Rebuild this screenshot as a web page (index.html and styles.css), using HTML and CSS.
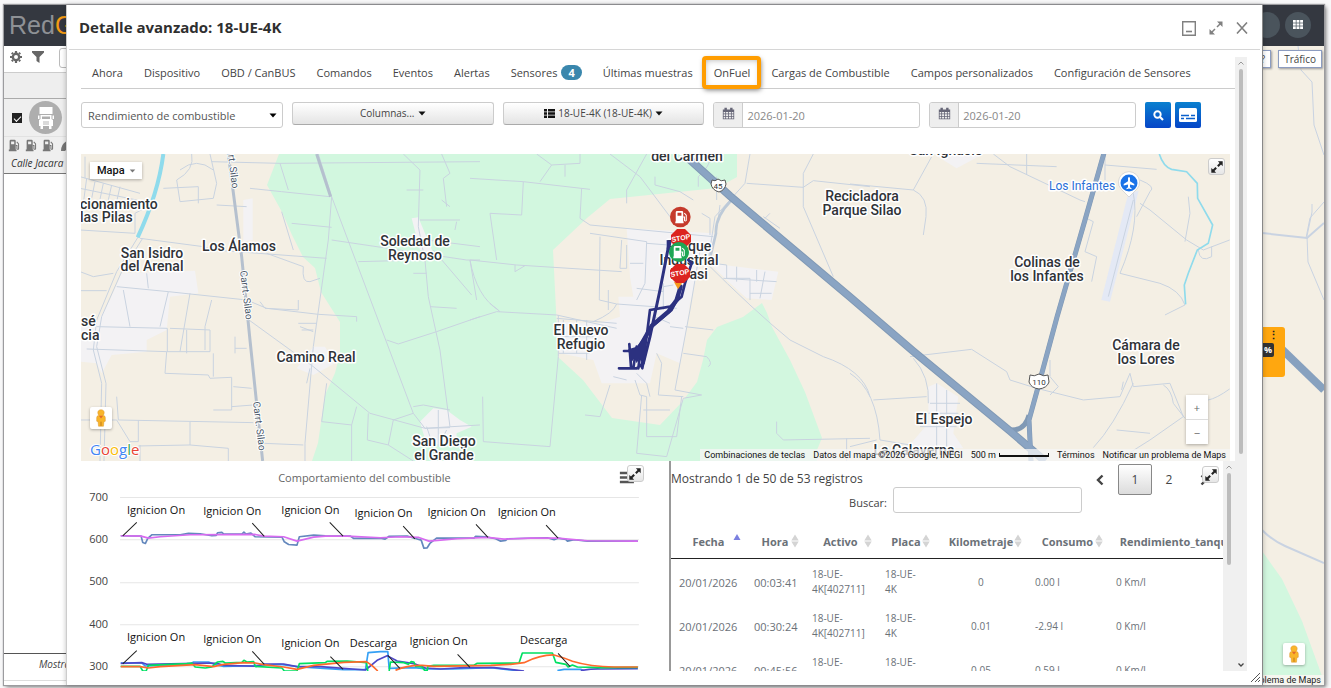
FILE: index.html
```html
<!DOCTYPE html>
<html lang="es">
<head>
<meta charset="utf-8">
<title>Detalle avanzado: 18-UE-4K</title>
<link rel="stylesheet" href="styles.css">
</head>
<body>
<svg class="defs" width="0" height="0" aria-hidden="true">
  <symbol id="expand" viewBox="0 0 16 16"><path d="M9 1.500H14.500V7L12.600 5.100 9.800 7.900 8.100 6.200 10.900 3.400ZM7 14.500H1.500V9L3.400 10.900 6.200 8.100 7.900 9.800 5.100 12.600Z"/></symbol>
  <symbol id="sort" viewBox="0 0 8 14"><path d="M4 .5L7.700 6.500H.3ZM4 13.500L.3 7.500H7.700Z"/></symbol>
  <symbol id="caret" viewBox="0 0 8 5"><path d="M.5.500H7.500L4 4.500Z"/></symbol>
  <symbol id="pump" viewBox="0 0 16 16"><path d="M2 2.500Q2 1 3.500 1H8Q9.500 1 9.500 2.500V13H10.500V15H1V13H2ZM3.800 3V6.500H7.700V3Z" fill-rule="evenodd"/><path d="M9.500 8H11V12Q12.200 13.500 13 12V6L10.800 3.600" fill="none" stroke="currentColor" stroke-width="1.300"/></symbol>
  <symbol id="pump-solid" viewBox="0 0 16 16"><path d="M2 2.500Q2 1 3.500 1H9Q10.500 1 10.500 2.500V13H11V15H1.500V13H2ZM4 3V6.500H8.500V3Z" fill-rule="evenodd"/><path d="M10.500 8H12V12Q13 13.300 14 12V6L11.800 3.600" fill="none" stroke="currentColor" stroke-width="1.200"/></symbol>
  <symbol id="calendar" viewBox="0 0 16 16"><path d="M1 3H3V1H6V3H10V1H13V3H15V15H1ZM2 6V8H4V6ZM5 6V8H7.500V6ZM8.500 6V8H11V6ZM12 6V8H14V6ZM2 9V11H4V9ZM5 9V11H7.500V9ZM8.500 9V11H11V9ZM12 9V11H14V9ZM2 12V14H4V12ZM5 12V14H7.500V12ZM8.500 12V14H11V12ZM12 12V14H14V12Z" fill-rule="evenodd"/></symbol>
  <symbol id="pegman" viewBox="0 0 22 24"><path d="M11 3C8.500 3 7.500 4.500 7.500 6.200Q7.500 7.800 8.500 8.900Q6.500 9.500 6.300 11.500V15.500L7.800 16 8.300 21H13.700L14.200 16 15.700 15.500V11.500Q15.500 9.500 13.500 8.900Q14.500 7.800 14.500 6.200C14.500 4.500 13.500 3 11 3Z" fill="#f9b52b" stroke="#d8902a" stroke-width=".5"/><path d="M8.700 9.500L11 12.500 13.300 9.500Z" fill="#e0692e"/><path d="M11 16V20.500" stroke="#b97418"/></symbol>
</svg>

<div class="app">
  <header class="topbar">
    <div class="logo">Red<span>G</span></div>
    <div class="top-actions">
      <button class="round" aria-label="Cuenta"></button>
      <button class="round" aria-label="Aplicaciones"><svg width="10" height="9" viewBox="0 0 10 9"><path d="M0 0H10V9H0Z" fill="#fff"/><path d="M3.200 0V9M6.700 0V9M0 3H10M0 6H10" stroke="#59646d" stroke-width=".8"/></svg></button>
    </div>
  </header>
  <div class="workspace">
    <aside class="sidebar">
      <div class="side-tools">
        <svg width="12" height="12" viewBox="0 0 12 12"><circle cx="6" cy="6" r="3.200" fill="none" stroke="#666" stroke-width="2.400"/><path d="M6 0V2M6 10V12M0 6H2M10 6H12M1.800 1.800L3 3M9 9L10.200 10.200M10.200 1.800L9 3M3 9L1.800 10.200" stroke="#666" stroke-width="2.200"/></svg>
        <svg width="12" height="12" viewBox="0 0 12 12"><path d="M0 0H12V1.500L7.500 6V12L4.500 10V6L0 1.500Z" fill="#666"/></svg>
        <input class="side-search" type="text" aria-label="Filtrar">
      </div>
      <div class="side-group"></div>
      <div class="unit">
        <div class="unit-main">
          <input type="checkbox" class="tick" checked aria-label="Seleccionar unidad">
          <span class="avatar"><svg width="16" height="22" viewBox="0 0 16 22"><path d="M1.500 0H14.500V7H1.500ZM2.500 8H13.500V12L15 13V19H13.500V22H11V19H5V22H2.500V19H1V13L2.500 12ZM0 8.500H1.500V12H0ZM14.500 8.500H16V12H14.500Z" fill="#fff"/><path d="M4 9.500H12V12H4Z" fill="#aeaeae"/><path d="M5 15H11M5 17H11" stroke="#aeaeae" stroke-width=".9"/></svg></span>
        </div>
        <div class="unit-icons">
          <svg width="13" height="13"><use href="#pump"/></svg>
          <svg width="13" height="13"><use href="#pump"/></svg>
          <svg width="13" height="13"><use href="#pump"/></svg>
          <svg width="13" height="13" viewBox="0 0 13 13"><path d="M2 12Q2 3 11 1V10Q7 10 6 12Z"/></svg>
        </div>
        <div class="unit-place">Calle Jacara</div>
      </div>
      <div class="side-foot"><span>Mostra</span></div>
    </aside>
    <div class="bg-map">
      <svg class="bg-art" viewBox="66 46 1258 639" preserveAspectRatio="xMaxYMid slice">
        <path d="M1262 551L1282 579 1302 621 1322 676V685H1262Z" fill="#d2f7df"/>
        <g fill="none" stroke="#c9d3e2">
          <path d="M1298 46L1301 70 1312 82 1314 125 1324 155"/>
          <path d="M1324 202L1310 218 1306 238M1324 300L1308 262 1307 236 1312 212 1312 204"/>
          <path d="M1262 233L1307 238 1324 223M1262 530Q1273 541 1285 546L1324 563" stroke-width="2"/>
        </g>
        <path d="M1262 330L1324 390" stroke="#87a1bf" stroke-width="8"/>
      </svg>
      <div class="bg-buttons"><button class="pill" aria-label="Ayuda">?</button><button class="pill">Tráfico</button></div>
      <div class="unit-card"><span class="dots">⋮</span><b>%</b></div>
      <button class="peg bg-peg" aria-label="Street View"><svg width="22" height="22"><use href="#pegman"/></svg></button>
      <div class="bg-credit">blema de Maps</div>
    </div>
  </div>

  <section class="modal" role="dialog" aria-labelledby="modal-title">
    <header class="modal-head">
      <h1 id="modal-title">Detalle avanzado: 18-UE-4K</h1>
      <div class="win-buttons">
        <button aria-label="Minimizar"><svg width="14" height="15" viewBox="0 0 14 15"><path d="M.7.700H13.300V14.300H.7Z" fill="none" stroke="#808080" stroke-width="1.400"/><path d="M4 10.500H10" stroke="#808080" stroke-width="1.600"/></svg></button>
        <button aria-label="Maximizar"><svg width="14" height="14" viewBox="0 0 14 14"><path d="M8 .5H13.500V6ZM6 13.500H.5V8Z" fill="#808080"/><path d="M12 2L8 6M2 12L6 8" stroke="#808080" stroke-width="1.500"/></svg></button>
        <button aria-label="Cerrar"><svg width="12" height="12" viewBox="0 0 12 12"><path d="M1 .5L11 11.500M11 .5L1 11.500" stroke="#808080" stroke-width="1.600"/></svg></button>
      </div>
    </header>
    <div class="modal-body">
      <div class="content">
        <nav class="tabs">
          <a href="#ahora">Ahora</a><a href="#dispositivo">Dispositivo</a><a href="#obd">OBD / CanBUS</a><a href="#comandos">Comandos</a><a href="#eventos">Eventos</a><a href="#alertas">Alertas</a><a href="#sensores">Sensores <span class="badge">4</span></a><a href="#muestras">Últimas muestras</a><a href="#onfuel" class="marked">OnFuel</a><a href="#cargas">Cargas de Combustible</a><a href="#campos">Campos personalizados</a><a href="#config">Configuración de Sensores</a>
        </nav>
        <div class="controls">
          <div class="select"><select aria-label="Reporte"><option>Rendimiento de combustible</option></select><svg width="8" height="5"><use href="#caret"/></svg></div>
          <button class="drop">Columnas...<svg width="8" height="5"><use href="#caret"/></svg></button>
          <button class="drop"><svg width="11" height="9" viewBox="0 0 11 9"><path d="M0 0H3V2.400H0ZM4 0H11V2.400H4ZM0 3.300H3V5.700H0ZM4 3.300H11V5.700H4ZM0 6.600H3V9H0ZM4 6.600H11V9H4Z"/></svg>18-UE-4K (18-UE-4K)<svg width="8" height="5"><use href="#caret"/></svg></button>
          <label class="date"><span><svg width="13" height="13"><use href="#calendar"/></svg></span><input type="text" value="2026-01-20" aria-label="Desde"></label>
          <label class="date"><span><svg width="13" height="13"><use href="#calendar"/></svg></span><input type="text" value="2026-01-20" aria-label="Hasta"></label>
          <div class="go">
            <button aria-label="Buscar"><svg width="11" height="11" viewBox="0 0 11 11"><circle cx="4.500" cy="4.500" r="3.200" fill="none" stroke="#fff" stroke-width="1.900"/><path d="M6.800 6.800L10 10" stroke="#fff" stroke-width="2.200"/></svg></button>
            <button aria-label="Leyenda"><svg width="18" height="14" viewBox="0 0 18 14"><rect width="18" height="14" rx="1.500" fill="#fff"/><path d="M2 7.500H10M12 7.500H16M2 10.500H5M7 10.500H16" stroke="#0a60cc" stroke-width="1.600"/></svg></button>
          </div>
        </div>

        <div class="map">
          <svg class="map-art" viewBox="81 154 1149 307" preserveAspectRatio="xMidYMid slice" role="img" aria-label="Mapa de recorrido">
            <rect x="-500" y="100" width="2400" height="420" fill="#f4efe4"/>
            <path fill="#d2f7df" d="M279 154L267 185 282 212 292 235 303 257 315 268 321 292 340 322V353L335 373 325 395 318 443 312 461H817V450L822 438 805 392 790 360 772 327 767 313 762 303 743 317 717 327 707 340 703 360 697 382 682 402 660 425 612 418 583 380 558 357 556 310 553 250 587 218 610 199 717 188 737 177V154Z"/>
            <g transform="translate(80 150) scale(.3333)">
              <path fill="#f3f2f4" d="M125 370L345 362 355 430 270 440 260 540 200 570V605L95 615 65 670 50 640 0 635V530L50 520 90 450ZM490 150L518 145 518 270 490 275ZM1020 815L1060 775 1100 780 1140 810 1175 830 1130 850V880L1040 885ZM995 205L1015 202 1060 310 1020 300ZM650 655L700 590 735 590 765 640 700 675Z"/>
              <g fill="none" stroke="#c9d3e0" stroke-width="3">
                <path d="M0 80L180 130M0 115L170 150M20 85L10 160M45 95L35 145M70 100L60 148M95 105L85 150M120 110L110 155M0 240L165 250V190L230 155M15 85V20M335 12Q345 60 290 90L300 155 400 145 410 100 390 12M300 60Q350 20 400 60M250 115L355 110V160M180 265L370 290 400 300 740 325M175 260L110 365 50 510 40 600 65 700 60 933M188 265L125 365 65 500 50 590 78 700 72 933" />
                <path d="M395 35L600 40 1200 35M410 165L500 170M510 115L605 125 750 140M600 40L625 120M0 365L40 380 100 370M0 422H80M110 410L265 425 500 450 560 475 715 493 830 500V515M265 425L240 530M130 420L150 530M200 370L205 415M330 430L300 605M395 450L375 530V600M50 530L262 535V605M20 597L260 605H390V540L270 535M320 610V540M260 605L255 670 385 675 390 685 455 682V780H400M460 710L515 715M455 770L520 765M110 740L115 810 520 818M0 810L110 810 150 875H175V812M330 815V885L175 888M180 885V933M330 885L445 895V933M550 880L670 885" />
                <path d="M715 12L755 140 745 270 700 590 675 880V933M500 505L700 650 870 790 1035 835 1200 825M690 655L680 700M740 700L725 815 815 825 815 933M830 770L815 825M865 790L862 870 925 885 1000 933M925 885L940 810 1000 790M1035 835L1110 833M970 12L1020 60 1015 230 1035 330 1045 440 1080 600 1110 830M1200 500L1070 545 955 582 920 570M755 140L1000 790 1035 835M755 270L1160 330H1200M835 335L1030 330M1040 270L1200 290M1020 210H1140M1130 215L1125 240M1060 300L1175 435M1085 150L1110 170M1085 12L1110 70 1090 85 1100 170M1030 120H980M1050 470L1130 475M1000 370H1040M1170 330L1190 450M635 220L755 232M605 185L640 300M560 310L670 350Q665 400 690 395L720 385M540 455L555 475 655 480V450M465 560V610M465 595H500M400 680V610M1000 770L1030 765 1110 780M1040 830L1060 890M1075 780V890M1100 840L1080 880M655 520H710M660 530L700 545M665 540H700" />
              </g>
              <path fill="none" stroke="#b5c0ce" stroke-width="9" d="M445 12L485 320 510 570 548 933M710 12L752 140"/>
              <path fill="none" stroke="#8fdbec" stroke-width="12" d="M250 12Q235 130 173 262"/>
            </g>
            <g transform="translate(470 150) scale(.3333)">
              <path fill="#f3f2f4" d="M470 235L730 250 735 285 690 340 660 460 650 530 630 640 560 610 540 700H395L370 630 270 610V515L390 520 450 500 445 440H490L480 380ZM720 340L925 365 905 450 830 445 770 390Z"/>
              <g fill="none" stroke="#c9d3e0" stroke-width="3">
                <path d="M0 85L160 95 360 118M160 95L155 195 60 190 80 330M200 12L245 45 210 95M245 45L330 40V12M285 45V80M420 12L510 80 600 200M530 12L470 120V160M335 115L330 205 360 225 730 260M360 250L530 275 525 400 500 450M390 260L388 450 440 462 620 475M455 270L450 355H470V285M530 280L595 285M480 340H520M500 415L580 425V400M0 330L140 345 455 365M135 345V365L165 347M0 510L80 485 260 495 440 535M0 330Q20 440 85 480M60 460L90 485M260 505L440 520M265 495V620L240 890 40 875 38 740M280 510V610M320 510V610M350 510V630M270 560H370M265 610H360M370 515Q430 490 440 462M415 420V480" />
                <path d="M690 300L660 480 615 720 695 735 640 745 590 920 500 910 515 735M685 110V80Q720 50 725 12M740 80V150M695 190L720 205V255M750 165L745 205M840 12L825 100 780 150 735 200 715 330M830 100L1000 112 1030 92 1200 110M1030 12L1000 70V170L1090 380M700 330Q850 480 960 570L1060 620Q1180 660 1200 740M730 340L770 345V385H840V450M800 350V395M860 360V395M885 365L870 445M760 385L920 395M840 430H905M640 610L710 620Q730 640 715 650M645 530L730 540M560 610L575 640 565 735 640 740M495 690L510 735 530 740V860H620L635 740M500 670L530 700 540 740M555 500L600 520M420 705L390 800 345 795M580 480V410L610 405M600 530L640 535M520 780H600M430 680L470 690M920 815V850L940 870 1200 865M1130 865V933M880 200L930 235M885 205L900 190M555 80V105L630 125 670 150" />
              </g>
              <path d="M785 150Q735 200 738 250L720 325" fill="none" stroke="#bdcad8" stroke-width="8"/>
            </g>
            <g transform="translate(850 150) scale(.3333)">
              <path fill="#f3f2f4" d="M235 710L260 700 325 740 310 850 340 895H170L235 820ZM250 12L320 55 400 12Z"/>
              <path fill="#e4e9f5" d="M835 130L866 122 780 455 754 450Z"/>
              <g fill="none" stroke="#c9d3e0" stroke-width="3">
                <path d="M0 102L190 120Q235 140 228 200L220 255M190 120L245 20M380 40L620 50M430 12L480 50 690 150 705 155M530 12V75M765 12V90M765 45L920 58M850 130Q870 230 810 370L930 400Q990 420 1005 465L945 495M870 160L900 180 1010 270 1060 300 1139 270M1045 300Q1050 340 1085 320V290M1015 140L1020 190 1005 275M870 90Q920 110 900 125L860 200M710 205L730 215 705 305 740 320 725 395M180 620L365 598 470 665 480 690 560 715 700 750 810 740 840 670 850 710 960 700 1000 800M70 750L230 740M0 670Q80 720 90 870L180 885M600 630V680L625 710 600 735M850 700Q790 830 730 893M815 720L820 695M1000 800L900 870 800 933M800 840L900 850M0 890L80 870M240 760H330M235 790H325M210 830H320M260 700V890M290 720V890M190 625Q240 680 235 760M940 705Q965 720 970 760L1005 805M1075 750Q1100 745 1139 717M775 440L850 150" />
              </g>
              <path fill="none" stroke="#8fdbec" stroke-width="5" d="M928 12Q940 50 965 58L1010 65 1042 100 1043 145 1088 225 1075 280 1042 300 1015 370 1003 405 1007 463"/>
            </g>
            <g fill="none" stroke="#8099b5">
              <path stroke-width="8" d="M688 158L730 196 850 297 913 351 1010 431 1045 461"/>
              <path stroke-width="5" d="M1104 153L1085 220 1057 317 1040 380 1029 420 1031 461M1010 430Q1025 431 1029 415"/>
            </g>
            <g fill="none" stroke="#8aa4c3">
              <path stroke-width="6" d="M688 158L730 196 850 297 913 351 1010 431 1045 461"/>
              <path stroke-width="4" d="M1104 153L1085 220 1057 317 1040 380 1029 420 1031 461"/>
            </g>
            <g class="place">
              <text x="80" y="209">cionamiento</text><text x="80" y="222">las Pilas</text>
              <text x="152" y="258" text-anchor="middle">San Isidro</text><text x="152" y="271" text-anchor="middle">del Arenal</text>
              <text x="239" y="251" text-anchor="middle">Los Álamos</text>
              <text x="415" y="246" text-anchor="middle">Soledad de</text><text x="415" y="260" text-anchor="middle">Reynoso</text>
              <text x="81" y="326">sé</text><text x="81" y="340">cia</text>
              <text x="316" y="362" text-anchor="middle">Camino Real</text>
              <text x="444" y="446" text-anchor="middle">San Diego</text><text x="444" y="460" text-anchor="middle">el Grande</text>
              <text x="687" y="161" text-anchor="middle">del Carmen</text>
              <text x="862" y="201" text-anchor="middle">Recicladora</text><text x="862" y="215" text-anchor="middle">Parque Silao</text>
              <text x="689" y="251" text-anchor="middle">Parque</text><text x="689" y="265" text-anchor="middle">Industrial</text><text x="689" y="279" text-anchor="middle">Fipasi</text>
              <text x="581" y="335" text-anchor="middle">El Nuevo</text><text x="581" y="349" text-anchor="middle">Refugio</text>
              <text x="946" y="155" text-anchor="middle">San Ignacio</text>
              <text x="1047" y="267" text-anchor="middle">Colinas de</text><text x="1047" y="281" text-anchor="middle">los Infantes</text>
              <text x="1146" y="350" text-anchor="middle">Cámara de</text><text x="1146" y="364" text-anchor="middle">los Lores</text>
              <text x="944" y="424" text-anchor="middle">El Espejo</text>
              <text x="914" y="455" text-anchor="middle">La Calaverna</text>
              <text class="airport" x="1049" y="190">Los Infantes</text>
            </g>
            <g class="road">
              <text transform="translate(228 155) rotate(83)">rt. Silao</text>
              <text transform="translate(240 271) rotate(83)">Carrt. Silao</text>
              <text transform="translate(253 402) rotate(83)">Carrt. Silao</text>
            </g>
            <g class="shield">
              <path d="M712 180Q715 182 718 179Q721 182 725 180L726 184Q725 190 719 192Q712 190 711 184Z"/><text x="718" y="189" text-anchor="middle">45</text>
              <path d="M1030 375Q1034 377 1039 374Q1044 377 1048 375L1049 382Q1047 388 1039 389Q1031 388 1029 382Z"/><text x="1039" y="385" text-anchor="middle">110</text>
            </g>
            <path d="M1129 197L1121 189A10.500 10.500 0 1 1 1137 189Z" fill="#fff" stroke="#bbb" stroke-width=".5"/>
            <circle cx="1129" cy="183" r="8.500" fill="#1a73e8"/>
            <path d="M1128 178Q1129 176 1130 178V181.200L1134.300 184V185.600L1130 184.500V187.300L1131.500 188.300V189.200L1129 188.600 1126.500 189.200V188.300L1128 187.300V184.500L1123.700 185.600V184L1128 181.200Z" fill="#fff"/>
            <g transform="translate(470 150) scale(.3333)">
              <g fill="none" stroke="#2c3180" stroke-linejoin="round" stroke-linecap="round">
                <path stroke-width="9" d="M597 282L570 420 540 560 520 640"/>
                <path stroke-width="8" d="M655 330L665 340 645 400 635 440 600 470 540 480 530 560 515 650M625 440L605 480 540 535"/>
                <path stroke-width="13" d="M632 410L620 450 595 485 545 528 510 590"/>
                <path stroke-width="8" d="M447 655H500L520 640M462 603H490M478 582L483 650M500 590L490 655M515 580L505 655M517 655L527 600"/>
              </g>
              <path fill="#2c3180" d="M475 598L500 590 530 550 530 612 518 640 508 626 500 640 494 624 482 640ZM590 270L605 272 600 300 590 298Z"/>
              <path fill="#f59a1d" d="M612 396L636 400 624 418Z"/>
              <circle cx="631" cy="201" r="31" fill="#c53a2c"/>
            </g>
            <g class="stop"><path d="M677 229H685L691 235V242L685 248H677L671 242V235Z"/><text transform="translate(672 242) rotate(-10)">STOP</text></g>
            <circle cx="679" cy="252" r="10" fill="#1ea655"/>
            <g class="stop"><path d="M676 264H684L690 270V277L684 283H676L670 277V270Z"/><text transform="translate(671 277) rotate(-10)">STOP</text></g>
            <g color="#fff" fill="#fff"><use href="#pump-solid" x="674" y="210" width="14" height="14"/><use href="#pump-solid" x="672" y="245" width="14" height="14"/></g>
          </svg>
          <button class="map-type">Mapa<svg width="7" height="4" viewBox="0 0 8 5"><use href="#caret"/></svg></button>
          <button class="expand map-expand" aria-label="Ampliar mapa"><svg width="14" height="14"><use href="#expand"/></svg></button>
          <button class="peg map-peg" aria-label="Street View"><svg width="22" height="22"><use href="#pegman"/></svg></button>
          <div class="google"><i>G</i><i>o</i><i>o</i><i>g</i><i>l</i><i>e</i></div>
          <div class="zoom"><button aria-label="Acercar">+</button><button aria-label="Alejar">−</button></div>
          <div class="credits"><span>Combinaciones de teclas</span><span>Datos del mapa ©2026 Google, INEGI</span><span class="scale">500 m<i></i></span><span>Términos</span><span>Notificar un problema de Maps</span></div>
        </div>

        <div class="lower">
          <div class="chart">
            <svg class="chart-art" viewBox="81 461 587 210" preserveAspectRatio="xMinYMin slice" role="img" aria-label="Comportamiento del combustible">
              <path d="M120 497.500H638M120 539.500H638M120 582.500H638M120 624.500H638M120 666.500H638" stroke="#e6e6e6"/>
              <g class="axis"><text x="108" y="501" text-anchor="end">700</text><text x="108" y="543" text-anchor="end">600</text><text x="108" y="585" text-anchor="end">500</text><text x="108" y="628" text-anchor="end">400</text><text x="108" y="670" text-anchor="end">300</text></g>
              <text class="chart-title" x="364" y="482" text-anchor="middle">Comportamiento del combustible</text>
              <g transform="translate(80 460) scale(.3333)" fill="none" stroke-width="5" stroke-linejoin="round">
                <path stroke="#6488bd" d="M122 227L183 228 188 247 196 250 203 235 215 224H300L325 220 360 221 395 227 408 226 412 218 425 217 430 221 485 222 491 216 497 222 512 219 525 230 605 231 612 245 625 253 650 255 657 230 700 225 735 227 810 228 820 235 900 234 914 237 925 229 980 228 1005 235 1022 240 1030 264 1040 263 1048 250 1068 234 1180 234 1185 229 1215 230 1245 236 1260 243 1275 241 1280 236 1400 233 1420 239 1432 234 1455 238 1460 243 1480 239 1520 243 1671 243"/>
                <path stroke="#d86bf0" d="M122 227L183 228 205 234 240 230 330 224 525 223 550 228 610 230 650 243 700 231 735 228 800 228 900 233 960 230 1015 232 1045 243 1080 240 1130 236 1220 232 1270 237 1350 234 1430 234 1520 242 1671 243"/>
                <path stroke="#35a0f5" d="M122 608H185L195 617 330 612 340 605H385L405 613 430 618 520 616 600 612 660 620 790 628H855L863 577 900 574 922 574 926 624 1000 622 1040 626H1120L1230 622 1320 632M1430 631L1450 627H1500L1510 631"/>
                <path stroke="#4e48c8" d="M122 609L185 607 200 612 380 608 410 609 430 615 530 618 550 611 610 611 650 619 720 619 855 629 890 600 920 586 950 602 1000 610 1035 623 1080 626 1150 622 1240 622 1330 632M1500 631Q1530 625 1560 626L1671 625"/>
                <path stroke="#00e062" d="M122 618H180L188 632H198L205 615 320 610 335 608 345 620 375 623 395 620 412 605 428 603 435 608 485 606 491 600 500 605 520 604 525 618 605 623 612 632H650L657 610 735 607 740 603 800 602 858 607 862 632M926 632L930 605 970 607 983 612 992 604 1000 605 1005 618 1025 620 1032 630 1040 631 1042 618 1060 615 1180 615 1190 609 1315 608 1325 578H1415L1425 606 1455 612 1462 620 1475 614 1490 620 1560 622 1671 621"/>
                <path stroke="#ff6a2c" d="M122 619H180L205 623 240 619 345 613 400 619 430 612 490 607 525 608 550 613 610 620 650 627 700 615 790 606 858 604 875 616 892 632M945 630Q980 614 1025 615L1060 618 1230 615 1290 612 1330 607Q1380 583 1420 584Q1450 592 1475 603 1530 620 1600 620L1671 620"/>
                <path stroke="#222" stroke-width="3" d="M170 187L128 227M516 189L552 229M748 187L788 228M968 198L1003 236M1186 193L1222 232M1396 195L1432 234M170 571L128 611M516 573L552 612M750 589L788 627M922 585L958 624M1131 582L1168 621M1432 579L1468 619"/>
              </g>
              <g class="note"><text x="156" y="514">Ignicion On</text><text x="232" y="515">Ignicion On</text><text x="310" y="514">Ignicion On</text><text x="383" y="517">Ignicion On</text><text x="456" y="516">Ignicion On</text><text x="526" y="516">Ignicion On</text><text x="156" y="641">Ignicion On</text><text x="232" y="643">Ignicion On</text><text x="310" y="647">Ignicion On</text><text x="373" y="647">Descarga</text><text x="438" y="645">Ignicion On</text><text x="543" y="644">Descarga</text></g>
              <path d="M619 473H633M619 477.500H633M619 482H633" stroke="#555" stroke-width="2.500"/>
            </svg>
            <button class="expand chart-expand" aria-label="Ampliar gráfica"><svg width="14" height="14"><use href="#expand"/></svg></button>
          </div>
          <div class="records">
            <div class="records-top">
              <div class="records-find">
                <div class="info">Mostrando 1 de 50 de 53 registros</div>
                <label class="search"><span>Buscar:</span> <input type="text"></label>
              </div>
              <div class="pager">
                <button aria-label="Anterior"><svg width="8" height="12" viewBox="0 0 8 12"><path d="M6.500 1.500L2 6 6.500 10.500" fill="none" stroke="#444" stroke-width="2.400"/></svg></button>
                <button class="current">1</button>
                <button>2</button>
                <button aria-label="Siguiente"><svg width="8" height="12" viewBox="0 0 8 12"><path d="M1.500 1.500L6 6 1.500 10.500" fill="none" stroke="#444" stroke-width="2.400"/></svg></button>
              </div>
            </div>
            <table>
              <colgroup><col class="c-date"><col class="c-hour"><col class="c-unit"><col class="c-hour"><col class="c-km"><col class="c-use"><col class="c-rate"></colgroup>
              <thead><tr>
                <th><div class="asc"><span>Fecha</span><svg width="8" height="14" viewBox="0 0 8 14"><path d="M4 0L7.500 6H.5Z"/></svg></div></th>
                <th><div><span>Hora</span><svg width="8" height="14"><use href="#sort"/></svg></div></th>
                <th><div><span>Activo</span><svg width="8" height="14"><use href="#sort"/></svg></div></th>
                <th><div><span>Placa</span><svg width="8" height="14"><use href="#sort"/></svg></div></th>
                <th><div><span>Kilometraje</span><svg width="8" height="14"><use href="#sort"/></svg></div></th>
                <th><div><span>Consumo</span><svg width="8" height="14"><use href="#sort"/></svg></div></th>
                <th><div><span>Rendimiento_tanque</span></div></th>
              </tr></thead>
              <tbody>
                <tr><td>20/01/2026</td><td>00:03:41</td><td>18-UE-<br>4K[402711]</td><td>18-UE-<br>4K</td><td class="mid">0</td><td>0.00 l</td><td>0 Km/l</td></tr>
                <tr><td>20/01/2026</td><td>00:30:24</td><td>18-UE-<br>4K[402711]</td><td>18-UE-<br>4K</td><td class="mid">0.01</td><td>-2.94 l</td><td>0 Km/l</td></tr>
                <tr><td>20/01/2026</td><td>00:45:56</td><td>18-UE-<br>4K[402711]</td><td>18-UE-<br>4K</td><td class="mid">0.05</td><td>0.59 l</td><td>0 Km/l</td></tr>
              </tbody>
            </table>
            <button class="expand records-expand" aria-label="Ampliar tabla"><svg width="14" height="14"><use href="#expand"/></svg></button>
          </div>
          <div class="bar inner-bar"><svg width="6" height="4" viewBox="0 0 6 4"><path d="M.5 3.500L3 1 5.500 3.500" fill="none" stroke="#999"/></svg><span class="thumb short"></span></div>
        </div>
      </div>
      <div class="bar"><svg width="6" height="4" viewBox="0 0 6 4"><path d="M.5 3.500L3 1 5.500 3.500" fill="none" stroke="#999"/></svg><span class="thumb"></span><svg class="down" width="6" height="4" viewBox="0 0 6 4"><path d="M.5.500L3 3 5.500.500" fill="none" stroke="#444" stroke-width="1.300"/></svg></div>
    </div>
    <svg class="grip" width="10" height="10" viewBox="0 0 10 10"><path d="M0 9L9 0M4 9L9 4M7 9L9 7" stroke="#555"/></svg>
  </section>
</div>
</body>
</html>
```
FILE: styles.css
```css
* { box-sizing: border-box; }
html, body { height: 100%; margin: 0; }
body {
  padding: 5px 7px 3px 4px;
  background: #f8f8f9;
  font-family: "Open Sans", "Noto Sans", sans-serif;
  font-size: 11px;
  line-height: 15px;
  color: #444;
  overflow: hidden;
}
button, input, select { font: inherit; color: inherit; margin: 0; padding: 0; border: 0; background: none; }
button { display: flex; align-items: center; justify-content: center; }
a { color: inherit; text-decoration: none; }
svg { display: block; flex: none; }
.defs { position: absolute; }

.app { position: relative; height: 100%; display: flex; flex-direction: column; background: #fff; box-shadow: 0 0 1px 1px #9c9c9f, 2px 2px 4px #777; }
.topbar { height: 41px; flex: none; display: flex; align-items: center; justify-content: space-between; padding: 0 13px 2px 5px; background: #343840; }
.logo { font: 25px/28px "Liberation Sans", sans-serif; color: #8e9195; }
.logo span { color: #f59b14; }
.top-actions { display: flex; gap: 5px; }
.round { width: 26px; height: 26px; border-radius: 50%; background: #4a545c; }
.workspace { flex: 1; display: flex; min-height: 0; }

.sidebar { width: 62px; overflow: hidden; flex: none; display: flex; flex-direction: column; }
.side-tools { height: 27px; flex: none; display: flex; gap: 10px; padding: 5px 0 0 6px; border-bottom: 1px solid #ccc; }
.side-search { width: 60px; height: 20px; flex: none; margin: -3px 0 0 5px; border: 1px solid #bbb; border-radius: 3px; }
.side-group { height: 25px; flex: none; background: #eee; }
.unit { background: #efefef; border-top: 1px solid #aaa; border-bottom: 1px solid #777; }
.unit-main { display: flex; align-items: center; gap: 7px; height: 38px; padding-left: 8px; border-bottom: 1px solid #e2e2e2; }
.tick { appearance: none; width: 10px; height: 10px; background: #222; display: grid; place-items: center; }
.tick::after { content: ""; width: 6px; height: 3px; border: solid #fff; border-width: 0 0 1px 1px; transform: rotate(-45deg); }
.avatar { width: 33px; height: 33px; flex: none; border-radius: 50%; background: #aeaeae; display: grid; place-items: center; }
.unit-icons { display: flex; gap: 4px; padding: 2px 4px; height: 18px; fill: #777; color: #777; }
.unit-place { height: 18px; line-height: 17px; padding-left: 7px; font-style: italic; font-size: 10px; color: #333; white-space: nowrap; }
.side-foot { margin-top: auto; height: 32px; border-top: 1px solid #555; font-style: italic; font-size: 10px; }
.side-foot span { display: block; padding: 3px 0 0 35px; height: 27px; border-bottom: 1px solid #ddd; }

.bg-map { position: relative; flex: 1; background: #f4efe4; overflow: hidden; }
.bg-art { width: 100%; height: 100%; }
.bg-buttons { position: absolute; top: 4px; right: 2px; display: flex; gap: 7px; }
.pill { height: 18px; padding: 0 5px; background: #fff; border: 1px solid #8c9cc0; box-shadow: 1px 1px 2px #999; font-size: 10px; }
.unit-card { position: absolute; top: 281px; right: 39px; width: 40px; height: 50px; background: #ffa70f; border-radius: 3px; color: #222; }
.unit-card .dots { position: absolute; top: 0; right: 6px; font-weight: 700; }
.unit-card b { position: absolute; top: 16px; right: 11px; width: 24px; height: 14px; background: #333; color: #fff; border-radius: 2px; font-size: 9px; line-height: 14px; text-align: right; padding-right: 2px; }
.peg { width: 22px; height: 22px; background: #fff; border-radius: 2px; box-shadow: 0 1px 3px rgba(0, 0, 0, .3); }
.bg-peg { position: absolute; right: 19px; bottom: 20px; }
.bg-credit { position: absolute; right: 0; bottom: 0; height: 10px; padding-right: 3px; background: #f6f6f0; font: 9px/10px Roboto, sans-serif; color: #222; }

.modal { position: absolute; top: 0; bottom: 0; left: 62px; right: 61px; display: flex; flex-direction: column; background: #fff; border: solid #ccc; border-width: 0 1px 0 1px; border-right-color: #888; box-shadow: 0 0 5px rgba(0, 0, 0, .25); }
.modal-head { height: 45px; flex: none; margin: 0 2px; padding: 0 12px 0 10px; display: flex; align-items: center; justify-content: space-between; border-bottom: 1px solid #d6d6d6; }
h1 { margin: 0; font-size: 15px; line-height: 20px; font-weight: 700; color: #2f2f2f; }
.win-buttons { display: flex; gap: 13px; align-items: center; padding-top: 2px; }
.modal-body { flex: 1; min-height: 0; display: flex; padding: 7px 15px 14px 14px; }
.content { flex: 1; min-width: 0; display: flex; flex-direction: column; }

.tabs { height: 32px; flex: none; display: flex; border-bottom: 1px solid #ccc; white-space: nowrap; }
.tabs a { display: flex; align-items: center; gap: 4px; padding: 0 10px 0 11px; }
.badge { padding: 0 7px; border-radius: 8px; background: #3a87ad; color: #fff; font-weight: 700; line-height: 15px; }
.tabs .marked { border-radius: 3px; outline: 4px solid #ff9d00; outline-offset: -3px; box-shadow: 1px 2px 5px #777, inset 1px 2px 7px #999; }

.controls { display: grid; grid-template-columns: 202fr 202fr 202fr 207fr 207fr 90fr; column-gap: 9px; padding: 13px 0 26px; align-items: start; }
.select { display: grid; align-items: center; height: 26px; border: 1px solid #ccc; border-radius: 3px; }
.select select, .select svg { grid-area: 1 / 1; }
.select select { appearance: none; width: 100%; padding-left: 6px; color: #555; }
.select svg { justify-self: end; margin-right: 5px; pointer-events: none; }
.drop { gap: 3px; height: 23px; border: 1px solid #ccc; border-bottom-color: #aaa; border-radius: 3px; background: linear-gradient(#fff, #e4e4e4); font-size: 10px; }
.drop svg { fill: #111; }
.date { display: flex; height: 26px; border: 1px solid #ccc; border-radius: 3px; overflow: hidden; }
.date span { width: 29px; flex: none; display: grid; justify-content: center; padding-top: 4px; background: #eee; border-right: 1px solid #ccc; fill: #667; }
.date input { flex: 1; min-width: 0; padding-left: 4px; color: #888; }
.go { display: flex; gap: 4px; }
.go button { width: 26px; height: 26px; border-radius: 2px; background: linear-gradient(#0a80cf, #0646c8); }

.map { position: relative; height: 307px; flex: none; margin-right: 5px; overflow: hidden; background: #f4efe4; }
.map-art { width: 100%; height: 100%; }
.place text { font: 500 14px Roboto, sans-serif; fill: #2f3237; stroke: #fff; stroke-width: 3px; paint-order: stroke; stroke-linejoin: round; }
.place .airport { font-weight: 400; font-size: 12px; fill: #2a6fd6; }
.road text { font: 10px Roboto, sans-serif; fill: #4d5a6b; stroke: #fff; stroke-width: 2px; paint-order: stroke; }
.shield path { fill: #fff; stroke: #555; stroke-width: 1px; }
.shield text { font: 8px Roboto, sans-serif; fill: #333; }
.stop path { fill: #dc2420; }
.stop text { font: 700 7px "Liberation Sans", sans-serif; fill: #fff; }
.map-type { position: absolute; top: 8px; left: 9px; height: 17px; padding: 0 6px 0 7px; gap: 4px; background: #fff; box-shadow: 0 1px 3px rgba(0, 0, 0, .3); font: 500 11px Roboto, sans-serif; color: #111; }
.map-type svg { fill: #777; }
.expand { width: 17px; height: 17px; position: absolute; border: 1px solid #ccc; border-radius: 3px; background: linear-gradient(#fff, #e6e6e6); fill: #222; }
.map-expand { top: 4px; right: 5px; }
.map-peg { position: absolute; left: 9px; bottom: 32px; }
.google { position: absolute; left: 9px; bottom: 1px; font: 500 15px/22px "Open Sans", sans-serif; -webkit-text-stroke: 2px #fff; paint-order: stroke; }
.google i { font-style: normal; color: #4285f4; }
.google i:nth-child(2), .google i:nth-child(6) { color: #ea4335; }
.google i:nth-child(3) { color: #fbbc05; }
.google i:nth-child(5) { color: #34a853; }
.zoom { position: absolute; right: 22px; bottom: 17px; width: 22px; display: grid; gap: 1px; background: #ddd; box-shadow: 0 1px 3px rgba(0, 0, 0, .3); color: #666; }
.zoom button { height: 24px; background: #fff; }
.credits { position: absolute; right: 0; bottom: 0; display: flex; font: 9px/12px Roboto, sans-serif; color: #111; }
.credits span { padding: 0 4px; background: rgba(245, 245, 245, .75); white-space: nowrap; }
.credits .scale { display: flex; gap: 3px; align-items: center; }
.scale i { width: 50px; height: 4px; border: solid #111; border-width: 0 1px 2px; }

.lower { flex: 1; min-height: 0; display: flex; overflow: hidden; }
.chart { position: relative; flex: 589; min-width: 0; overflow: hidden; border-right: 2px solid #999; }
.chart-art { width: 100%; height: 100%; }
.chart-art text { font-size: 11px; fill: #444; }
.chart-art .chart-title { fill: #666; }
.chart-art .note text { fill: #111; text-anchor: middle; }
.chart-expand { top: 4px; right: 25px; }
.records { position: relative; flex: 553; min-width: 0; overflow: hidden; color: #6b7178; }
.records-top { display: flex; justify-content: space-between; height: 66px; color: #444; }
.records-find { width: 411px; }
.info { padding-top: 10px; font-size: 12px; line-height: 16px; }
.search { display: flex; gap: 6px; justify-content: flex-end; align-items: center; }
.search span { padding-top: 5px; }
.search input { width: 189px; height: 26px; border: 1px solid #ccc; border-radius: 3px; }
.pager { display: flex; align-items: flex-start; flex: 1; font-size: 12px; padding: 3px 1px 0 0; justify-content: flex-end; }
.pager button { width: 34px; height: 31px; }
.pager button:first-child, .pager button:last-child { width: 36px; }
.pager .current { border: 1px solid #888; border-radius: 2px; background: linear-gradient(#fff, #dcdcdc); }
.records-expand { top: 5px; right: 4px; }
table { width: 575px; table-layout: fixed; border-collapse: collapse; }
.c-date { width: 75px; }
.c-hour { width: 58px; }
.c-unit { width: 73px; }
.c-km { width: 92px; }
.c-use { width: 81px; }
.c-rate { width: 138px; }
th { padding: 0; height: 31px; border-bottom: 1px solid #222; font-size: 11px; }
th div { display: flex; align-items: center; fill: #d4d4d4; padding-bottom: 2px; }
th span { flex: 1; text-align: center; }
th svg { margin: 0 5px 0 -13px; }
th .asc { fill: #7b80e0; }
td { height: 44px; padding: 0 0 0 8px; font-size: 10px; vertical-align: middle; white-space: nowrap; }
td:nth-child(-n+2) { font-size: 11px; }
tbody tr:first-child td { height: 46px; padding-top: 2px; }
.mid { text-align: center; padding-right: 8px; }

.bar { width: 12px; flex: none; display: flex; flex-direction: column; align-items: center; padding: 4px 0; gap: 4px; background: #f0f0f0; }
.thumb { width: 4px; height: 385px; border-radius: 2px; background: #bcbcbc; }
.thumb.short { height: 92px; }
.down { margin-top: auto; }
.grip { position: absolute; right: 1px; bottom: 2px; }
```
